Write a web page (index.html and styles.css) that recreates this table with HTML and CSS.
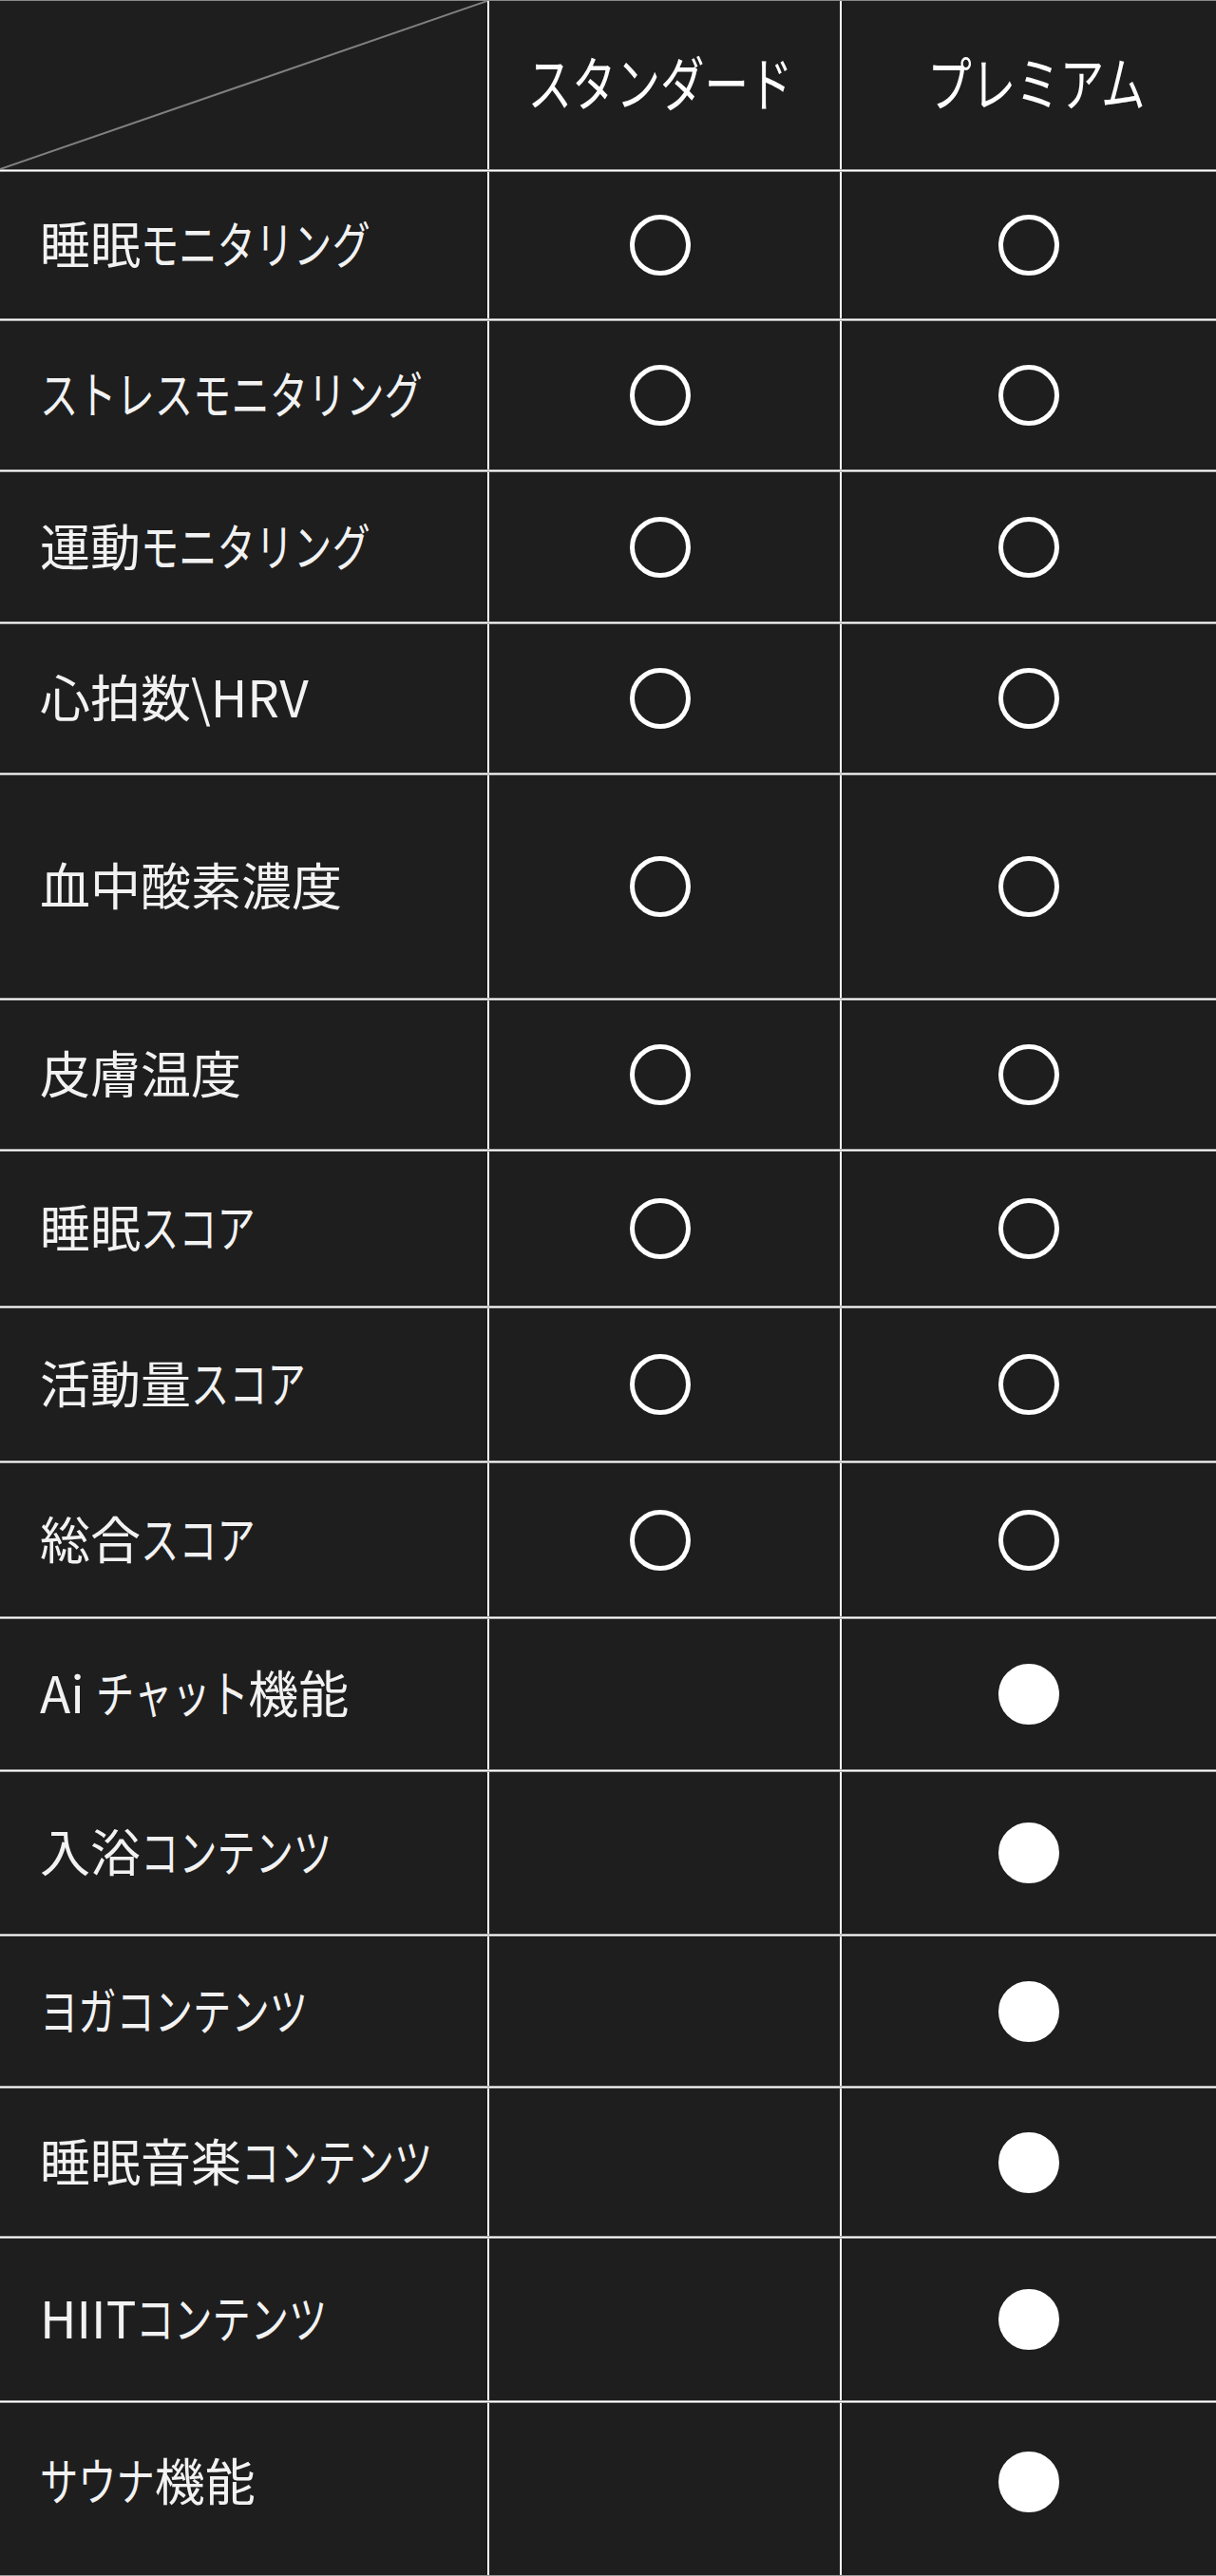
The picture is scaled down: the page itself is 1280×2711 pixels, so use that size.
FILE: index.html
```html
<!DOCTYPE html>
<html lang="ja">
<head>
<meta charset="utf-8">
<title>プラン比較</title>
<link rel="stylesheet" href="styles.css">
</head>
<body>
<div class="table">
  <div class="row head">
    <div class="cell label corner">
      <svg class="diag" viewBox="0 0 513 177" preserveAspectRatio="none"><line x1="513" y1="0" x2="0" y2="177" /></svg>
    </div>
    <div class="cell std"><span class="htext">スタンダード</span></div>
    <div class="cell pre"><span class="htext shift">プレミアム</span></div>
  </div>
  <div class="sep"></div>
  <div class="row"><div class="cell label"><span class="ltext">睡眠<span class="kana" style="--n:6">モニタリング</span></span></div><div class="cell std"><i class="mark"></i></div><div class="cell pre"><i class="mark"></i></div></div>
  <div class="sep"></div>
  <div class="row"><div class="cell label"><span class="ltext"><span class="kana" style="--n:10">ストレスモニタリング</span></span></div><div class="cell std"><i class="mark"></i></div><div class="cell pre"><i class="mark"></i></div></div>
  <div class="sep"></div>
  <div class="row"><div class="cell label"><span class="ltext">運動<span class="kana" style="--n:6">モニタリング</span></span></div><div class="cell std"><i class="mark"></i></div><div class="cell pre"><i class="mark"></i></div></div>
  <div class="sep"></div>
  <div class="row"><div class="cell label"><span class="ltext">心拍数\HRV</span></div><div class="cell std"><i class="mark"></i></div><div class="cell pre"><i class="mark"></i></div></div>
  <div class="sep"></div>
  <div class="row"><div class="cell label"><span class="ltext">血中酸素濃度</span></div><div class="cell std"><i class="mark"></i></div><div class="cell pre"><i class="mark"></i></div></div>
  <div class="sep"></div>
  <div class="row"><div class="cell label"><span class="ltext">皮膚温度</span></div><div class="cell std"><i class="mark"></i></div><div class="cell pre"><i class="mark"></i></div></div>
  <div class="sep"></div>
  <div class="row"><div class="cell label"><span class="ltext">睡眠<span class="kana" style="--n:3">スコア</span></span></div><div class="cell std"><i class="mark"></i></div><div class="cell pre"><i class="mark"></i></div></div>
  <div class="sep"></div>
  <div class="row"><div class="cell label"><span class="ltext">活動量<span class="kana" style="--n:3">スコア</span></span></div><div class="cell std"><i class="mark"></i></div><div class="cell pre"><i class="mark"></i></div></div>
  <div class="sep"></div>
  <div class="row"><div class="cell label"><span class="ltext">総合<span class="kana" style="--n:3">スコア</span></span></div><div class="cell std"><i class="mark"></i></div><div class="cell pre"><i class="mark"></i></div></div>
  <div class="sep"></div>
  <div class="row"><div class="cell label"><span class="ltext">Ai <span class="kana" style="--n:4">チャット</span>機能</span></div><div class="cell std"></div><div class="cell pre"><i class="mark full"></i></div></div>
  <div class="sep"></div>
  <div class="row"><div class="cell label"><span class="ltext">入浴<span class="kana" style="--n:5">コンテンツ</span></span></div><div class="cell std"></div><div class="cell pre"><i class="mark full"></i></div></div>
  <div class="sep"></div>
  <div class="row"><div class="cell label"><span class="ltext"><span class="kana" style="--n:7">ヨガコンテンツ</span></span></div><div class="cell std"></div><div class="cell pre"><i class="mark full"></i></div></div>
  <div class="sep"></div>
  <div class="row"><div class="cell label"><span class="ltext">睡眠音楽<span class="kana" style="--n:5">コンテンツ</span></span></div><div class="cell std"></div><div class="cell pre"><i class="mark full"></i></div></div>
  <div class="sep"></div>
  <div class="row"><div class="cell label"><span class="ltext">HIIT<span class="kana" style="--n:5">コンテンツ</span></span></div><div class="cell std"></div><div class="cell pre"><i class="mark full"></i></div></div>
  <div class="sep"></div>
  <div class="row"><div class="cell label"><span class="ltext"><span class="kana" style="--n:3">サウナ</span>機能</span></div><div class="cell std"></div><div class="cell pre"><i class="mark full"></i></div></div>
</div>
</body>
</html>
```

FILE: styles.css
```css
html, body {
  margin: 0;
  padding: 0;
  background: #1e1e1e;
}

body {
  font-family: "Noto Sans CJK JP", "Noto Sans", sans-serif;
  color: #f2f2f2;
}

.table {
  width: 1280px;
  border-top: 1px solid #8a8a8a;
  border-bottom: 1px solid #9a9a9a;
  background: #1e1e1e;
}

.row {
  display: flex;
  box-sizing: border-box;
  height: 156px;
}

.row.head { height: 177px; }

/* row heights (in order of rows, counting head and separators) */
.table > .row:nth-child(3)  { height: 154px; }
.table > .row:nth-child(5)  { height: 156px; }
.table > .row:nth-child(7)  { height: 157px; }
.table > .row:nth-child(9)  { height: 156px; }
.table > .row:nth-child(11) { height: 234px; }
.table > .row:nth-child(13) { height: 156px; }
.table > .row:nth-child(15) { height: 162px; }
.table > .row:nth-child(17) { height: 160px; }
.table > .row:nth-child(19) { height: 161px; }
.table > .row:nth-child(21) { height: 158px; }
.table > .row:nth-child(23) { height: 170px; }
.table > .row:nth-child(25) { height: 157px; }
.table > .row:nth-child(27) { height: 155px; }
.table > .row:nth-child(29) { height: 170px; }
.table > .row:nth-child(31) { height: 181px; }
.table > .row:nth-child(31) > .cell { padding-bottom: 16px; }

.sep {
  height: 1px;
  background: #ffffff;
  border-top: 1px solid #a3a3a3;
  border-bottom: 1px solid #a3a3a3;
}

.cell {
  display: flex;
  align-items: center;
  box-sizing: border-box;
}

.label {
  width: 513px;
  padding-left: 42px;
}

.corner {
  position: relative;
}

.diag {
  position: absolute;
  left: 0;
  top: 0;
  width: 100%;
  height: 100%;
}

.diag line {
  stroke: #808080;
  stroke-width: 2;
  vector-effect: non-scaling-stroke;
}

.std {
  width: 371px;
  border-left: 2px solid #ffffff;
  justify-content: center;
  padding-right: 10px;
}

.pre {
  width: 396px;
  border-left: 2px solid #ffffff;
  justify-content: center;
}

.ltext {
  display: inline-block;
  font-size: 53px;
  line-height: 1;
  white-space: nowrap;
  margin-top: -5px;
}

.kana {
  display: inline-block;
  transform: scaleX(0.76);
  transform-origin: left center;
  margin-right: calc(var(--n) * -0.24em);
}

.htext {
  display: inline-block;
  font-size: 62px;
  line-height: 1;
  white-space: nowrap;
  transform: scaleX(0.75);
  transform-origin: center center;
  color: #ffffff;
  margin-top: -10px;
}

.htext.shift {
  margin-left: 16px;
}

.mark {
  display: block;
  width: 64px;
  height: 64px;
  box-sizing: border-box;
  border: 5px solid #ffffff;
  border-radius: 50%;
}

.mark.full {
  background: #ffffff;
}
```
